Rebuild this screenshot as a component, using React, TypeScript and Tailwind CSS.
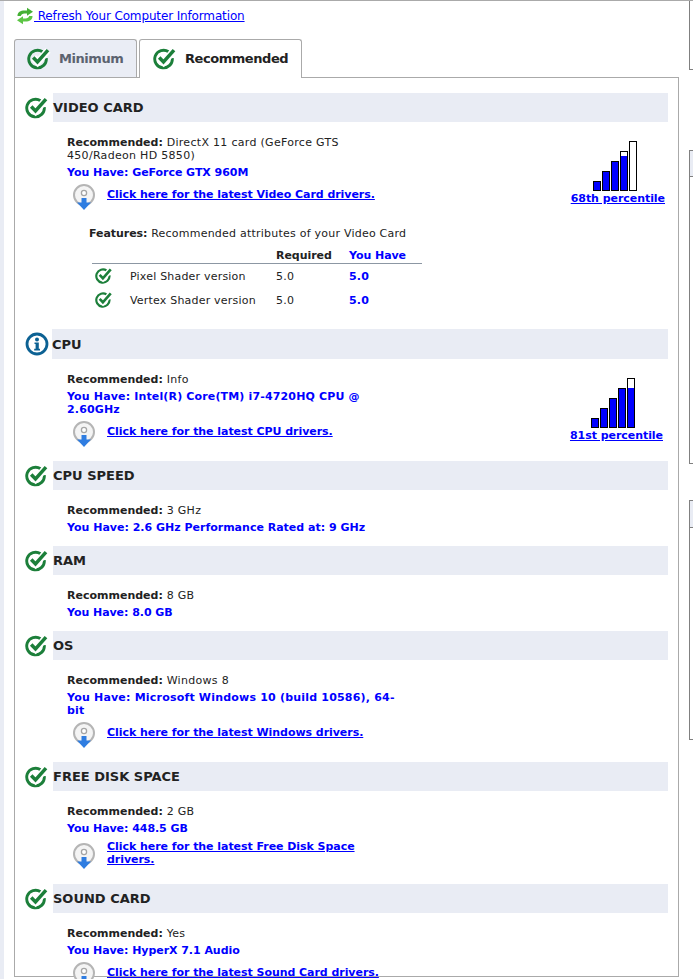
import type { ReactNode } from "react";

const CheckIcon = ({ className = "w-6 h-6" }: { className?: string }) => (
  <svg viewBox="0 0 24 24" className={className}>
    <path d="M15.55 4.8A8.8 8.8 0 1 0 19.3 11.2" fill="none" stroke="#1c7f3a" strokeWidth="2.9" />
    <path d="M6.5 10.500l4.200 4.500L21 3.500" fill="none" stroke="#fff" strokeWidth="7" />
    <path d="M6.200 10.500l4.300 4.500L21 3.200" fill="none" stroke="#1c7f3a" strokeWidth="3.500" />
  </svg>
);

const InfoIcon = () => (
  <svg viewBox="0 0 24 24" className="w-6 h-6">
    <circle cx="12" cy="12" r="10" fill="#fff" stroke="#0c6193" strokeWidth="2.800" />
    <circle cx="12" cy="7.400" r="2" fill="#0c6193" />
    <path d="M9.500 10.400h4.300v6.400h1.200v1.700H9.200v-1.700h1.400v-4.700H9.500z" fill="#0c6193" />
  </svg>
);

const RefreshIcon = () => (
  <svg viewBox="0 0 18 18" className="w-[18px] h-[18px] shrink-0">
    <path d="M1.500 9C1.500 5 4.500 3.500 8.500 3.500H11V.8L17 4.800 11 8.800V6.500H8.500C6.500 6.500 5.200 7.500 4.800 9z" fill="#45b035" />
    <path d="M16.500 9C16.500 13 13.500 14.500 9.500 14.500H7V17.200L1 13.200 7 9.200V11.500H9.500C11.500 11.500 12.800 10.500 13.200 9z" fill="#5cc545" />
  </svg>
);

const DiscIcon = () => (
  <svg viewBox="0 0 24 27" className="w-6 h-[27px] shrink-0">
    <circle cx="12" cy="11" r="10" fill="#f4f4f4" stroke="#b5b5b5" strokeWidth="2" />
    <circle cx="12" cy="9" r="2.600" fill="#fff" stroke="#a5a5a5" strokeWidth="1.300" />
    <path d="M9.500 14h5v4.500H19L12 26 5 18.500h4.500z" fill="#2f7de1" />
  </svg>
);

const Bars = ({ fill, gap }: { fill: number; gap: number }) => {
  const heights = [10, 20, 30, 40, 50];
  return (
    <div className="flex items-end gap-px h-[50px] mr-[6px]">
      {heights.map((h, i) => (
        <div
          key={i}
          className="w-[6px] border border-black bg-white flex flex-col justify-end box-content"
          style={{ height: h - 2 }}
        >
          <div className="bg-[#0000ff]" style={{ height: i < fill ? h - 2 : i === fill ? h - 2 - gap : 0 }} />
        </div>
      ))}
    </div>
  );
};

const Percentile = ({
  label,
  fill,
  gap,
  className,
}: {
  label: string;
  fill: number;
  gap: number;
  className: string;
}) => (
  <div className={`flex flex-col items-center ${className}`}>
    <Bars fill={fill} gap={gap} />
    <a href="#" className="font-bold text-[#0000ff] underline whitespace-nowrap mt-[1px] tracking-[-0.05px]">
      {label}
    </a>
  </div>
);

const Recommended = ({ children }: { children: ReactNode }) => (
  <p className="text-[#222] tracking-[0.3px]">
    <b className="tracking-normal">Recommended:</b> {children}
  </p>
);

const YouHave = ({ children, className = "tracking-[-0.05px]" }: { children: ReactNode; className?: string }) => (
  <p className={`font-bold text-[#0000ff] mt-1 ${className}`}>You Have: {children}</p>
);

const DriverLink = ({ children, className = "mt-[5px]" }: { children: ReactNode; className?: string }) => (
  <div className={`flex items-center gap-[11px] ml-[5px] ${className}`}>
    <DiscIcon />
    <a href="#" className="font-bold text-[#0000ff] underline w-[285px] -mt-[7px] tracking-[-0.05px]">
      {children}
    </a>
  </div>
);

const Section = ({
  title,
  icon,
  headerClass = "h-[29px] leading-[29px]",
  children,
  className,
}: {
  title: string;
  icon?: ReactNode;
  headerClass?: string;
  children: ReactNode;
  className: string;
}) => (
  <section className={className}>
    <div className="flex items-center">
      <div className="w-[38px] pl-[10px] shrink-0">{icon ?? <CheckIcon />}</div>
      <h2 className={`flex-1 bg-[#e9ecf4] text-[13px] font-bold text-[#222] ${headerClass}`}>{title}</h2>
    </div>
    <div className="pl-[52px] pt-[14px] flex justify-between">{children}</div>
  </section>
);

const rows = ["Pixel Shader version", "Vertex Shader version"];

export default function App() {
  return (
    <div
      className="h-[979px] overflow-hidden flex bg-white border-t border-[#aaa] text-[11px] leading-[13px]"
      style={{ fontFamily: '"DejaVu Sans", Verdana, sans-serif' }}
    >
      <div className="w-[4px] shrink-0 bg-[#e9ecf4]" />
      <main className="w-[685px] shrink-0 pl-[10px]">
        <a href="#" className="flex items-center ml-[2px] mt-[6px] h-[18px] text-[12px] text-[#0000ff]">
          <RefreshIcon />
          <span className="underline tracking-[-0.14px]">{"\u00a0Refresh Your Computer Information"}</span>
        </a>

        <div className="flex gap-[2px] mt-[14px] h-[39px] text-[13px] font-bold tracking-[-0.45px]">
          <div className="w-[123px] h-[38px] border border-b-0 border-[#aaa] rounded-t-[3px] bg-[#eaedf5] text-[#5c6370] flex items-center gap-[8px] pl-[12px]">
            <CheckIcon />
            Minimum
          </div>
          <div className="relative z-10 w-[163px] h-[39px] border border-b-0 border-[#aaa] rounded-t-[3px] bg-white text-[#222] flex items-center gap-[8px] pl-[13px] pb-[1px]">
            <CheckIcon />
            Recommended
          </div>
        </div>

        <div className="w-[665px] h-[900px] -mt-px border border-[#aaa] pt-[15px] pr-[10px]">
          <Section title="VIDEO CARD" className="h-[236px]">
            <div className="w-[340px]">
              <Recommended>DirectX 11 card (GeForce GTS 450/Radeon HD 5850)</Recommended>
              <YouHave>GeForce GTX 960M</YouHave>
              <DriverLink>Click here for the latest Video Card drivers.</DriverLink>
              <div className="ml-[22px] mt-[16px] w-[340px] text-[#222]">
                <p className="tracking-[0.23px]">
                  <b className="tracking-[-0.05px]">Features:</b> Recommended attributes of your Video Card
                </p>
                <div className="ml-[3px] mt-[9px] w-[330px] grid grid-cols-[38px_146px_73px_73px] items-center tracking-[0.2px]">
                  <div className="col-span-2 h-[15px] border-b border-[#8c97a3]" />
                  <div className="h-[15px] border-b border-[#8c97a3] font-bold tracking-[-0.05px]">Required</div>
                  <div className="h-[15px] border-b border-[#8c97a3] font-bold text-[#0000ff] tracking-[-0.05px]">You Have</div>
                  {rows.map((row) => (
                    <div key={row} className="contents">
                      <div className="h-[24px] flex items-center pl-[3px]">
                        <CheckIcon className="w-[18px] h-[18px]" />
                      </div>
                      <div>{row}</div>
                      <div>5.0</div>
                      <div className="font-bold text-[#0000ff]">5.0</div>
                    </div>
                  ))}
                </div>
              </div>
            </div>
            <Percentile label="68th percentile" fill={3} gap={4} className="mt-[5px] mr-[3px]" />
          </Section>

          <Section title="CPU" icon={<InfoIcon />} headerClass="h-[30px] leading-[31px] -ml-px" className="h-[132px]">
            <div className="w-[340px]">
              <Recommended>Info</Recommended>
              <YouHave className="tracking-[0.15px]">Intel(R) Core(TM) i7-4720HQ CPU @ 2.60GHz</YouHave>
              <DriverLink>Click here for the latest CPU drivers.</DriverLink>
            </div>
            <Percentile label="81st percentile" fill={4} gap={9} className="mt-[5px] mr-[5px]" />
          </Section>

          <Section title="CPU SPEED" className="h-[85px]">
            <div className="w-[340px]">
              <Recommended>3 GHz</Recommended>
              <p className="font-bold text-[#0000ff] mt-1 whitespace-nowrap">You Have: 2.6 GHz Performance Rated at: 9 GHz</p>
            </div>
          </Section>

          <Section title="RAM" className="h-[85px]">
            <div className="w-[340px]">
              <Recommended>8 GB</Recommended>
              <YouHave>8.0 GB</YouHave>
            </div>
          </Section>

          <Section title="OS" className="h-[131px]">
            <div className="w-[340px]">
              <Recommended>Windows 8</Recommended>
              <YouHave className="tracking-[0.2px]">Microsoft Windows 10 (build 10586), 64-bit</YouHave>
              <DriverLink>Click here for the latest Windows drivers.</DriverLink>
            </div>
          </Section>

          <Section title="FREE DISK SPACE" className="h-[122px]">
            <div className="w-[340px]">
              <Recommended>2 GB</Recommended>
              <YouHave>448.5 GB</YouHave>
              <DriverLink className="mt-[8px]">Click here for the latest Free Disk Space drivers.</DriverLink>
            </div>
          </Section>

          <Section title="SOUND CARD" className="h-[100px]">
            <div className="w-[340px]">
              <Recommended>Yes</Recommended>
              <YouHave>HyperX 7.1 Audio</YouHave>
              <DriverLink>Click here for the latest Sound Card drivers.</DriverLink>
            </div>
          </Section>
        </div>
      </main>

      <aside className="flex-1 flex flex-col">
        <div className="h-[69px] border-l border-b border-[#808080]" />
        <div className="mt-[80px] h-[314px] border-l border-t border-b border-[#808080]">
          <div className="h-[26px] bg-[#e9ecf4] border-b border-[#808080]" />
        </div>
        <div className="mt-[36px] h-[240px] border-l border-t border-b border-[#808080]">
          <div className="h-[27px] bg-[#e9ecf4] border-b border-[#808080]" />
        </div>
      </aside>
    </div>
  );
}
